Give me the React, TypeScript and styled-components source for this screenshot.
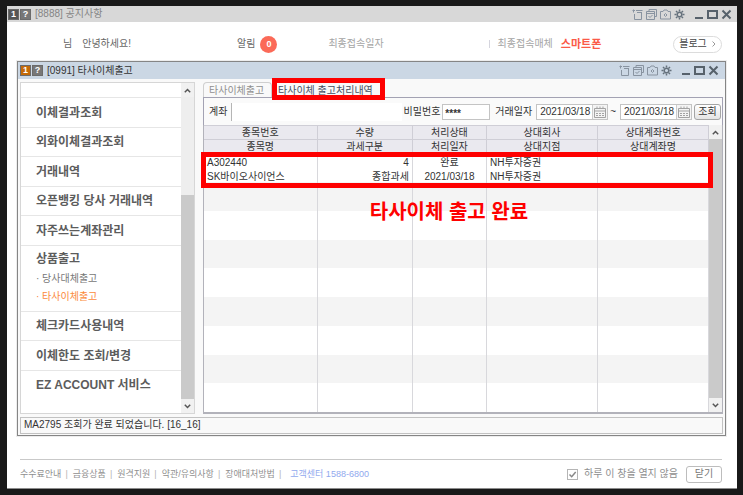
import React from 'react';
import styled, { createGlobalStyle, css } from 'styled-components';

const GlobalStyle = createGlobalStyle`
  *, *::before, *::after { box-sizing: border-box; }
  body {
    margin: 0;
    background: #191919;
    color: #333;
    font: 10px/14px "Liberation Sans", "Noto Sans CJK KR", sans-serif;
  }
  button, input { font: inherit; color: inherit; margin: 0; padding: 0; }
  a { color: inherit; text-decoration: none; }
  ul { list-style: none; margin: 0; padding: 0; }
  svg { display: block; }
`;

const Desktop = styled.div`
  display: flex;
  min-height: 100vh;
  padding: 6px 6px 6px 7px;
`;

const NoticeWindow = styled.main`
  flex: 1;
  min-width: 0;
  display: flex;
  flex-direction: column;
  background: #fff;
  border-bottom: 1px solid #8c8c8c;
`;

const TitleBar = styled.header<{ $active?: boolean }>`
  display: flex;
  align-items: center;
  height: ${p => (p.$active ? 17 : 16)}px;
  padding: ${p => (p.$active ? '0 6px 0 2px' : '0 5px 0 1px')};
  background: ${p => (p.$active ? '#cbd7e4' : '#d8d8d8')};
  color: ${p => (p.$active ? '#333' : '#858585')};
  flex: none;
`;

const Badge = styled.span<{ $tone: string }>`
  width: 11px;
  height: 11px;
  margin-right: 1px;
  border: 1px solid #6b6b6b;
  background: ${p => p.$tone};
  color: #fff;
  font-weight: bold;
  font-size: 9px;
  line-height: 9px;
  text-align: center;
`;

const WindowTitle = styled.h1`
  margin: 0 auto 0 3px;
  font-size: 10px;
  font-weight: normal;
  white-space: nowrap;
`;

const Tools = styled.div`
  display: flex;
  align-items: center;
  gap: 3px;
`;

const ToolButton = styled.button<{ $gapBefore?: boolean }>`
  width: 11px;
  height: 11px;
  margin-left: ${p => (p.$gapBefore ? 5 : 0)}px;
  border: 0;
  background: none;
  color: #8893a0;
`;

const Greeting = styled.div`
  display: flex;
  align-items: center;
  height: 39px;
  padding: 5px 15px 0 56px;
  color: #666;
  white-space: nowrap;
  flex: none;
`;

const Hello = styled.span`
  margin-left: 10px;
`;

const Alarm = styled.span`
  display: flex;
  align-items: center;
  gap: 5px;
  margin-left: 106px;
`;

const AlarmCount = styled.b`
  width: 17px;
  height: 17px;
  border-radius: 50%;
  background: #fb6a58;
  color: #fff;
  font-size: 9px;
  line-height: 17px;
  text-align: center;
`;

const LastDate = styled.span`
  margin-left: 51px;
  color: #a5a5a5;
`;

const LastDevice = styled.span`
  display: flex;
  align-items: center;
  gap: 8px;
  margin: 0 auto 0 105px;
  color: #a5a5a5;

  &::before {
    content: '';
    width: 1px;
    height: 8px;
    background: #d5d5de;
  }

  strong {
    color: #fb5a48;
    font-size: 11px;
  }
`;

const BlogLink = styled.a`
  display: flex;
  align-items: center;
  justify-content: center;
  gap: 5px;
  height: 17px;
  width: 49px;
  border: 1px solid #dcdcdc;
  border-radius: 9px;
  color: #444;
`;

const InnerWindow = styled.section`
  flex: 1;
  display: flex;
  flex-direction: column;
  margin: 0 11px 0 10px;
  border: 1px solid #858585;
  background: #f9f9f9;
  outline: 1px solid #ededed;
`;

const Workspace = styled.div`
  flex: 1;
  display: flex;
  gap: 8px;
  padding: 3px 2px;
`;

const SideMenu = styled.nav`
  display: flex;
  width: 175px;
  flex: none;
  border: 1px solid #d6d6d6;
  background: #fff;
`;

const MenuList = styled.ul`
  flex: 1;
  display: flex;
  flex-direction: column;
  padding: 14px 0;
  font-size: 12px;
  font-weight: bold;
  color: #5c5c5c;
`;

const MenuItem = styled.li<{ $open?: boolean }>`
  display: flex;
  flex-direction: column;
  justify-content: center;
  flex: ${p => (p.$open ? '0 0 66px' : '1 0 28px')};
  padding: 1px 0 0 15px;
  border-top: 1px solid #e6e6e6;
  white-space: nowrap;
`;

const SubMenu = styled.ul`
  padding-top: 4px;
  font-size: 10px;
  font-weight: normal;
  line-height: 18px;
`;

const SubLink = styled.a<{ $current?: boolean }>`
  color: ${p => (p.$current ? '#fb8a3c' : '#777')};
`;

const ScrollTrack = styled.div`
  display: flex;
  flex-direction: column;
  width: 13px;
  flex: none;
  background: #eee;
`;

const ScrollArrow = styled.button`
  display: grid;
  place-items: center;
  width: 13px;
  height: 14px;
  flex: none;
  border: 0;
  background: #f1f1f1;
  color: #555;
`;

const ScrollThumb = styled.div<{ $part: number }>`
  flex: ${p => p.$part};
  background: #cacaca;
`;

const ScrollSpace = styled.div<{ $part: number }>`
  flex: ${p => p.$part};
`;

const Content = styled.section`
  flex: 1;
  min-width: 0;
  display: flex;
  flex-direction: column;
`;

const Tabs = styled.div`
  display: flex;
  height: 15px;
  flex: none;
`;

const Tab = styled.button<{ $selected?: boolean }>`
  position: relative;
  padding: 1px 5px 0;
  min-width: ${p => (p.$selected ? 113 : 69)}px;
  text-align: left;
  white-space: nowrap;
  border: 1px solid #cfcfcf;
  border-bottom: 0;
  border-radius: 4px 4px 0 0;
  background: #f9f9f9;
  color: ${p => (p.$selected ? '#444c60' : '#8f8f8f')};
`;

const markFrame = css`
  position: absolute;
  border: 5px solid #fe0000;
  pointer-events: none;
`;

const TabMark = styled.span`
  ${markFrame}
  inset: -5px -1px -3px;
  z-index: 1;
`;

const SearchBar = styled.form`
  display: flex;
  align-items: center;
  height: 28px;
  flex: none;
  padding: 0 1px 0 5px;
  border: solid #a3a2b3;
  border-width: 1px 1px 0;
  background: #fafafa;
  white-space: nowrap;
`;

const AccountInput = styled.input`
  flex: 1;
  min-width: 0;
  height: 18px;
  margin: 0 2px 0 4px;
  border: 0;
  border-left: 1px solid #b5b5b5;
  background: #fff;
`;

const PasswordInput = styled.input`
  width: 48px;
  height: 16px;
  margin: 0 5px 0 2px;
  padding: 3px 0 0 2px;
  border: 1px solid #c4c4c4;
  background: #fff;
  font-weight: bold;
`;

const DateField = styled.span`
  display: flex;
  width: 72px;
  height: 16px;
  margin-left: 4px;
  border: 1px solid #c4c4c4;
  background: #fff;
`;

const DateInput = styled.input`
  flex: 1;
  min-width: 0;
  padding-left: 3px;
  border: 0;
  background: none;
`;

const CalendarButton = styled.button`
  display: grid;
  place-items: center;
  width: 15px;
  border: 0;
  border-left: 1px solid #ccc;
  background: #f4f4f4;
  color: #a3a3a3;
`;

const Tilde = styled.span`
  margin-left: 2px;
`;

const SearchButton = styled.button`
  width: 27px;
  height: 16px;
  margin-left: 2px;
  border: 1px solid #a5a5a5;
  border-radius: 3px;
  background: linear-gradient(#fff, #e4e4e4);
`;

const GridArea = styled.div`
  position: relative;
  flex: 1;
  display: flex;
  border: solid #b2b2ba;
  border-width: 0 1px 2px;
  background: #fff;
`;

const Grid = styled.table`
  flex: 1;
  min-width: 0;
  border-collapse: collapse;
  table-layout: fixed;
`;

const Column = styled.col<{ $share: number }>`
  width: ${p => p.$share}%;
`;

const HeadCell = styled.th`
  height: 14px;
  padding: 1px 0 0;
  line-height: 12px;
  font-weight: normal;
  background: #eae9ef;
  border: solid #cfced6;
  border-width: 1px 1px 0 0;
`;

const BodyRow = styled.tr<{ $shaded?: boolean }>`
  background: ${p => (p.$shaded ? '#f4f4f4' : '#fff')};
`;

const Cell = styled.td<{ $align?: string }>`
  height: 14px;
  padding: 4px 3px 0;
  line-height: 10px;
  white-space: nowrap;
  text-align: ${p => p.$align ?? 'left'};
  border-right: 1px solid #d8d8dc;
`;

const RowMark = styled.div`
  ${markFrame}
  top: 27px;
  left: -3px;
  right: 9px;
  height: 36px;
`;

const Callout = styled.p`
  position: absolute;
  top: 73px;
  left: 32%;
  margin: 0;
  color: #fe0000;
  font-size: 20px;
  line-height: 28px;
  font-weight: bold;
  white-space: nowrap;
`;

const StatusBar = styled.div`
  height: 17px;
  flex: none;
  margin: 0 2px 1px;
  padding-left: 3px;
  border: 1px solid #c2c2c2;
  line-height: 14px;
`;

const Footer = styled.footer`
  display: flex;
  align-items: center;
  flex: none;
  height: 29px;
  margin: 23px 15px 0 13px;
  border-top: 1px solid #c9c9c9;
  color: #8f8f8f;
  font-size: 9px;
  white-space: nowrap;
`;

const FooterLinks = styled.ul`
  display: flex;
  margin-right: auto;

  li + li::before {
    content: '|';
    margin: 0 5px 0 4px;
    color: #b5b5b5;
  }
`;

const CallCenter = styled.a`
  color: #91a9ee;
  margin-left: 4px;
`;

const DayCheck = styled.label`
  display: flex;
  align-items: center;
  gap: 6px;
  font-size: 10px;
`;

const CheckBox = styled.input`
  appearance: none;
  grid-area: 1 / 1;
  width: 11px;
  height: 11px;
  border: 1px solid #b5b5b5;
  background: #fff;

  &:not(:checked) + svg { visibility: hidden; }
`;

const CheckFrame = styled.span`
  display: grid;
  place-items: center;

  svg { grid-area: 1 / 1; pointer-events: none; }
`;

const CloseButton = styled.button`
  width: 36px;
  height: 17px;
  margin-left: 8px;
  border: 1px solid #bdbdbd;
  border-radius: 3px;
  background: #fff;
  font-size: 10px;
  color: #777;
`;

const icons: Record<string, React.ReactNode> = {
  '새 창': (
    <>
      <path d="M4 1.5h6.500M2.500 5v5.500h7v-7" />
      <path d="M.5 1.500h2.500M1.500 .5v3M5 3.500h5" />
    </>
  ),
  '창 겹치기': (
    <>
      <path d="M3 2.500v-2h7.500v7h-2" />
      <path d="M.5 2.500h8v8h-8zM.5 4.500h8M2.500 7l1.500 1.500 2.500-2.500" />
    </>
  ),
  '화면 캡처': (
    <>
      <path d="M.5 2.500h2.500l1-1.500h3l1 1.500h2.500v7.500h-10z" />
      <path d="M5.500 4.500l1.500 1.500-1.500 1.500-1.500-1.500z" />
    </>
  ),
  '설정': (
    <g stroke="#65717c">
      <circle cx="5.500" cy="5.500" r="2.300" strokeWidth="1.500" />
      <path
        strokeWidth="1.500"
        d="M5.500 .5v2M5.500 8.500v2M.5 5.500h2M8.500 5.500h2M2 2l1.300 1.300M7.700 7.700l1.300 1.300M9 2l-1.300 1.300M3.300 7.700l-1.300 1.300"
      />
    </g>
  ),
  '최소화': <path stroke="#56616b" strokeWidth="2" d="M2 9h8" />,
  '최대화': <path stroke="#56616b" strokeWidth="2" d="M1 2h9v7h-9z" />,
  '창 닫기': <path stroke="#56616b" strokeWidth="2" d="M1.500 1.500l8 8M9.500 1.500l-8 8" />,
};

function WindowTools() {
  return (
    <Tools>
      {Object.entries(icons).map(([name, shape]) => (
        <ToolButton key={name} type="button" aria-label={name} $gapBefore={name === '최소화'}>
          <svg width="11" height="11" viewBox="0 0 11 11" fill="none" stroke="currentColor">
            {shape}
          </svg>
        </ToolButton>
      ))}
    </Tools>
  );
}

function Arrow({ down }: { down?: boolean }) {
  return (
    <ScrollArrow type="button" aria-label={down ? '아래로' : '위로'}>
      <svg width="7" height="5" viewBox="0 0 7 5" fill="none" stroke="currentColor" strokeWidth="1.500">
        <path d={down ? 'M.8.8l2.700 2.700L6.200.8' : 'M.8 4.200l2.700-2.700 2.700 2.700'} />
      </svg>
    </ScrollArrow>
  );
}

function DatePicker({ label }: { label: string }) {
  return (
    <DateField>
      <DateInput aria-label={label} defaultValue="2021/03/18" />
      <CalendarButton type="button" aria-label={`${label} 달력`}>
        <svg width="12" height="12" viewBox="0 0 12 12" fill="none" stroke="currentColor">
          <path d="M.5 2.500h11v9h-11zM.5 5h11M3 .5v2.500M6 .5v2.500M9 .5v2.500" />
          <path d="M2 7.500h8M2 9.500h8" strokeDasharray="2 1" />
        </svg>
      </CalendarButton>
    </DateField>
  );
}

const menuBefore = ['이체결과조회', '외화이체결과조회', '거래내역', '오픈뱅킹 당사 거래내역', '자주쓰는계좌관리'];
const menuAfter = ['체크카드사용내역', '이체한도 조회/변경', 'EZ ACCOUNT 서비스'];
const shares = [22.4, 18.9, 14.7, 22, 22];
const aligns = ['left', 'right', 'center', 'left', 'left'];
const headRows = [
  ['종목번호', '수량', '처리상태', '상대회사', '상대계좌번호'],
  ['종목명', '과세구분', '처리일자', '상대지점', '상대계좌명'],
];
const records = [
  ['A302440', '4', '완료', 'NH투자증권', ''],
  ['SK바이오사이언스', '종합과세', '2021/03/18', 'NH투자증권', ''],
  ...Array.from({ length: 16 }, () => ['', '', '', '', '']),
];
const footerLinks = ['수수료안내', '금융상품', '원격지원', '약관/유의사항', '장애대처방법'];

const MenuEntry = ({ text }: { text: string }) => (
  <MenuItem>
    <a href="#">{text}</a>
  </MenuItem>
);

export default function App() {
  return (
    <>
      <GlobalStyle />
      <Desktop>
        <NoticeWindow>
          <TitleBar>
            <Badge $tone="#555">1</Badge>
            <Badge $tone="#777">?</Badge>
            <WindowTitle>[8888] 공지사항</WindowTitle>
            <WindowTools />
          </TitleBar>
          <Greeting>
            <span>님</span>
            <Hello>안녕하세요!</Hello>
            <Alarm>
              알림 <AlarmCount>0</AlarmCount>
            </Alarm>
            <LastDate>최종접속일자</LastDate>
            <LastDevice>
              최종접속매체 <strong>스마트폰</strong>
            </LastDevice>
            <BlogLink href="#">
              블로그
              <svg width="4" height="6" viewBox="0 0 4 6" fill="none" stroke="#999">
                <path d="M.5.5L3 3 .5 5.500" />
              </svg>
            </BlogLink>
          </Greeting>

          <InnerWindow>
            <TitleBar $active>
              <Badge $tone="#c46a08">1</Badge>
              <Badge $tone="#777">?</Badge>
              <WindowTitle as="h2">[0991] 타사이체출고</WindowTitle>
              <WindowTools />
            </TitleBar>
            <Workspace>
              <SideMenu>
                <MenuList>
                  {menuBefore.map(text => (
                    <MenuEntry key={text} text={text} />
                  ))}
                  <MenuItem $open>
                    <a href="#">상품출고</a>
                    <SubMenu>
                      <li>
                        <SubLink href="#">· 당사대체출고</SubLink>
                      </li>
                      <li>
                        <SubLink href="#" $current>· 타사이체출고</SubLink>
                      </li>
                    </SubMenu>
                  </MenuItem>
                  {menuAfter.map(text => (
                    <MenuEntry key={text} text={text} />
                  ))}
                </MenuList>
                <ScrollTrack>
                  <Arrow />
                  <ScrollSpace $part={98} />
                  <ScrollThumb $part={204} />
                  <Arrow down />
                </ScrollTrack>
              </SideMenu>

              <Content>
                <Tabs role="tablist">
                  <Tab role="tab" type="button">타사이체출고</Tab>
                  <Tab role="tab" type="button" aria-selected $selected>
                    타사이체 출고처리내역
                    <TabMark />
                  </Tab>
                </Tabs>
                <SearchBar onSubmit={e => e.preventDefault()}>
                  <label htmlFor="account">계좌</label>
                  <AccountInput id="account" />
                  <label htmlFor="password">비밀번호</label>
                  <PasswordInput id="password" defaultValue="****" />
                  <span>거래일자</span>
                  <DatePicker label="시작일" />
                  <Tilde>~</Tilde>
                  <DatePicker label="종료일" />
                  <SearchButton type="submit">조회</SearchButton>
                </SearchBar>
                <GridArea>
                  <Grid>
                    <colgroup>
                      {shares.map((share, i) => (
                        <Column key={i} $share={share} />
                      ))}
                    </colgroup>
                    <thead>
                      {headRows.map((row, r) => (
                        <tr key={r}>
                          {row.map(text => (
                            <HeadCell key={text}>{text}</HeadCell>
                          ))}
                        </tr>
                      ))}
                    </thead>
                    <tbody>
                      {records.map((row, r) => (
                        <BodyRow key={r} $shaded={Math.floor(r / 2) % 2 === 1}>
                          {row.map((text, c) => (
                            <Cell key={c} $align={aligns[c]}>{text}</Cell>
                          ))}
                        </BodyRow>
                      ))}
                    </tbody>
                  </Grid>
                  <ScrollTrack>
                    <Arrow />
                    <ScrollThumb $part={1} />
                    <Arrow down />
                  </ScrollTrack>
                  <RowMark />
                  <Callout>타사이체 출고 완료</Callout>
                </GridArea>
              </Content>
            </Workspace>
            <StatusBar role="status">MA2795 조회가 완료 되었습니다. [16_16]</StatusBar>
          </InnerWindow>

          <Footer>
            <FooterLinks>
              {footerLinks.map(text => (
                <li key={text}>
                  <a href="#">{text}</a>
                </li>
              ))}
              <li>
                <CallCenter href="#">고객센터 1588-6800</CallCenter>
              </li>
            </FooterLinks>
            <DayCheck>
              <CheckFrame>
                <CheckBox type="checkbox" defaultChecked />
                <svg width="9" height="9" viewBox="0 0 9 9" fill="none" stroke="#888" strokeWidth="1.500">
                  <path d="M1.500 4.500l2.200 2.200 4-4.700" />
                </svg>
              </CheckFrame>
              하루 이 창을 열지 않음
            </DayCheck>
            <CloseButton type="button">닫기</CloseButton>
          </Footer>
        </NoticeWindow>
      </Desktop>
    </>
  );
}
